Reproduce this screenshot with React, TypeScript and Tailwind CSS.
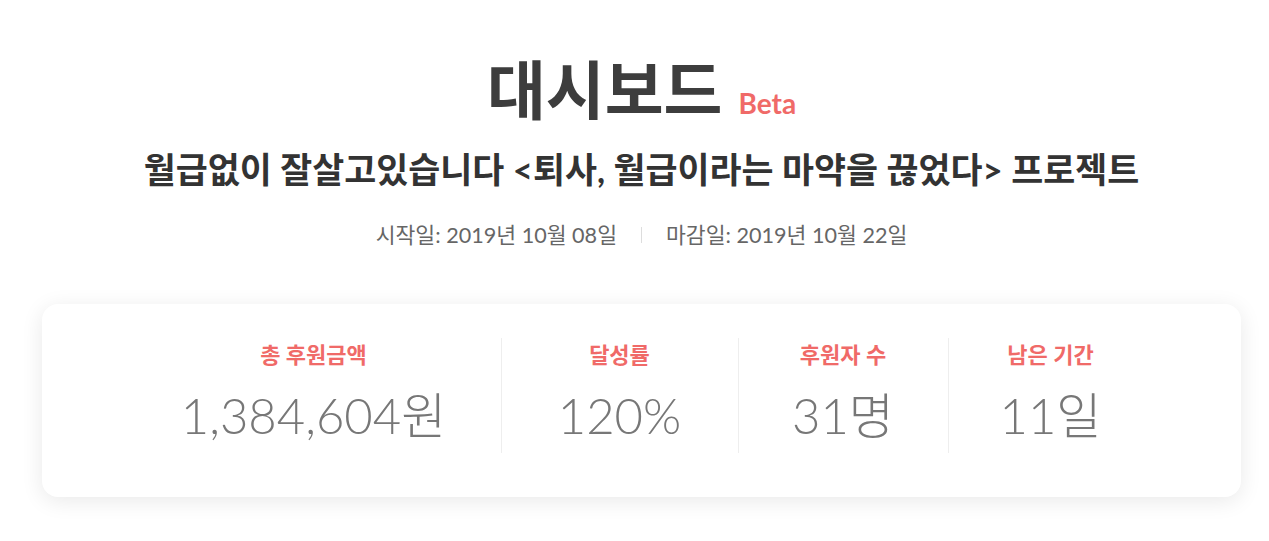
const stats = [
    { label: "총 후원금액", value: "1,384,604원", width: "w-[374px]" },
    { label: "달성률", value: "120%", width: "w-[237px]" },
    { label: "후원자 수", value: "31명", width: "w-[210px]" },
    { label: "남은 기간", value: "11일", width: "w-[205px]" },
]

const App = () => {
    return (
        <div
            className="min-h-screen bg-white pl-[14px]"
            style={{ fontFamily: 'Lato, "Noto Sans CJK KR", sans-serif' }}
        >
            <div className="px-7 pt-[52px] flex flex-col items-center">
                <h1 className="text-[64px] leading-[76px] font-bold text-[#3d3d3d]">
                    대시보드
                    <span className="ml-4 text-[28px] font-bold text-[#f06a68]">Beta</span>
                </h1>
                <h2 className="mt-[5px] text-[34.8px] leading-[47px] font-bold text-[#333]">
                    월급없이 잘살고있습니다 &lt;퇴사, 월급이라는 마약을 끊었다&gt; 프로젝트
                </h2>
                <div className="mt-[26px] flex items-center text-[21.6px] leading-[32px] text-[#666]">
                    <span>시작일: 2019년 10월 08일</span>
                    <span className="mx-6 h-[16px] w-px bg-[#ddd]" />
                    <span>마감일: 2019년 10월 22일</span>
                </div>
                <div className="mt-[53px] w-full h-[193px] rounded-2xl bg-white shadow-[0_4px_22px_rgba(0,0,0,0.09)] flex justify-center items-start pt-[34px] pr-[4px]">
                    {stats.map((s, i) => (
                        <div
                            key={s.label}
                            className={`flex flex-col items-center h-[115px] ${s.width} ${i > 0 ? "border-l border-[#eee]" : ""}`}
                        >
                            <p className="pt-[3px] text-[22px] leading-[28px] font-bold text-[#f06a68]">{s.label}</p>
                            <p className="mt-[18px] text-[49px] leading-[56px] font-light text-[#777]">{s.value}</p>
                        </div>
                    ))}
                </div>
            </div>
        </div>
    )
}

export default App
